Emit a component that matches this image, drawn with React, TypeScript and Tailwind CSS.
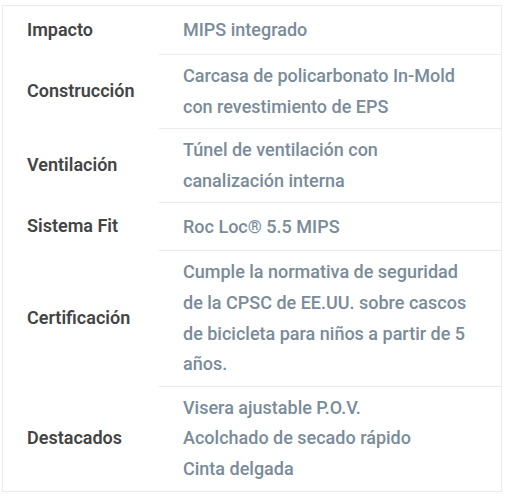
const specs: { label: string; lines: string[] }[] = [
  { label: "Impacto", lines: ["MIPS integrado"] },
  { label: "Construcción", lines: ["Carcasa de policarbonato In-Mold con revestimiento de EPS"] },
  { label: "Ventilación", lines: ["Túnel de ventilación con canalización interna"] },
  { label: "Sistema Fit", lines: ["Roc Loc® 5.5 MIPS"] },
  {
    label: "Certificación",
    lines: ["Cumple la normativa de seguridad de la CPSC de EE.UU. sobre cascos de bicicleta para niños a partir de 5 años."],
  },
  { label: "Destacados", lines: ["Visera ajustable P.O.V.", "Acolchado de secado rápido", "Cinta delgada"] },
];

export default function App() {
  return (
    <div className="min-h-screen bg-white pt-[5px] pl-[2px] font-['Roboto',sans-serif] text-[18px]">
      <div className="w-[500px] border border-[#ebebeb]">
        {specs.map((row, i) => (
          <div key={row.label} className="flex">
            <div className="w-[156px] shrink-0 flex items-center pl-6 py-3 leading-6 font-semibold text-[#444]">
              {row.label}
            </div>
            <div
              className={`flex-1 flex flex-col justify-center pl-6 pr-6 py-[6px] leading-[1.7] font-medium text-[#7a8b99] ${
                i > 0 ? "border-t border-[#ebebeb]" : ""
              }`}
            >
              {row.lines.map((l) => (
                <div key={l}>{l}</div>
              ))}
            </div>
          </div>
        ))}
      </div>
    </div>
  );
}
